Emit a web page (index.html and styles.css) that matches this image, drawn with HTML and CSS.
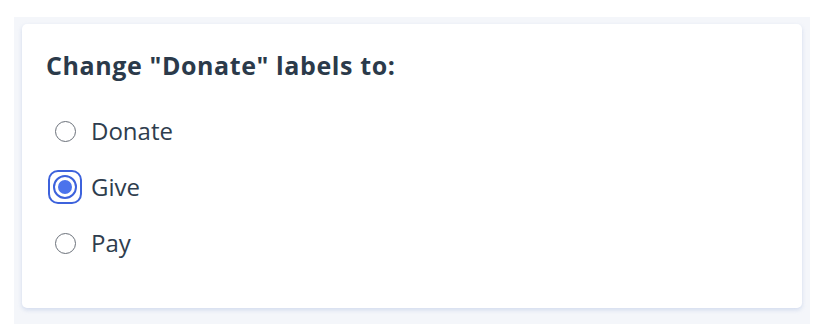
FILE: index.html
```html
<!DOCTYPE html>
<html lang="en">
<head>
    <meta charset="UTF-8">
    <meta name="viewport" content="width=device-width, initial-scale=1.0">
    <title>Donate Label</title>
    <link rel="stylesheet" href="styles.css">
</head>
<body>
    <div class="panel">
        <div class="card">
            <h2>Change "Donate" labels to:</h2>
            <div class="options">
                <label class="option">
                    <span class="radio-wrap"><input type="radio" name="label" value="donate"></span>
                    <span>Donate</span>
                </label>
                <label class="option">
                    <span class="radio-wrap focused"><input type="radio" name="label" value="give" checked></span>
                    <span>Give</span>
                </label>
                <label class="option">
                    <span class="radio-wrap"><input type="radio" name="label" value="pay"></span>
                    <span>Pay</span>
                </label>
            </div>
        </div>
    </div>
</body>
</html>
```

FILE: styles.css
```css
* {
    margin: 0;
    padding: 0;
    box-sizing: border-box;
    font-family: "Open Sans", sans-serif;
}

body {
    background: white;
    padding: 17px 16px 0 14px;
}

.panel {
    background: #f4f6fa;
    padding: 7px 8px 16px 8px;
}

.card {
    background: white;
    height: 284px;
    border-radius: 5px;
    padding: 26px 24px 0 24px;
    box-shadow: 0 2px 4px rgba(160, 180, 220, 0.4);
}

h2 {
    font-size: 25px;
    font-weight: 700;
    letter-spacing: 0.6px;
    color: #2b3a4a;
    line-height: 30px;
    margin-bottom: 34px;
}

.options {
    display: flex;
    flex-direction: column;
    gap: 22px;
}

.option {
    display: flex;
    align-items: center;
    gap: 9px;
    font-size: 24px;
    line-height: 34px;
    color: #2e3d4e;
    height: 34px;
}

.radio-wrap {
    width: 34px;
    height: 34px;
    margin-left: 2px;
    display: flex;
    align-items: center;
    justify-content: center;
    border: 2px solid transparent;
    border-radius: 10px;
}

.radio-wrap.focused {
    border-color: #3d62dc;
}

input[type="radio"] {
    appearance: none;
    width: 21px;
    height: 21px;
    border: 1.5px solid #6b717a;
    border-radius: 50%;
    background: white;
    display: grid;
    place-items: center;
}

input[type="radio"]:checked {
    width: 24px;
    height: 24px;
    border: 2px solid #3d62dc;
}

input[type="radio"]:checked::before {
    content: "";
    width: 14px;
    height: 14px;
    border-radius: 50%;
    background: #4b73ec;
}
```
